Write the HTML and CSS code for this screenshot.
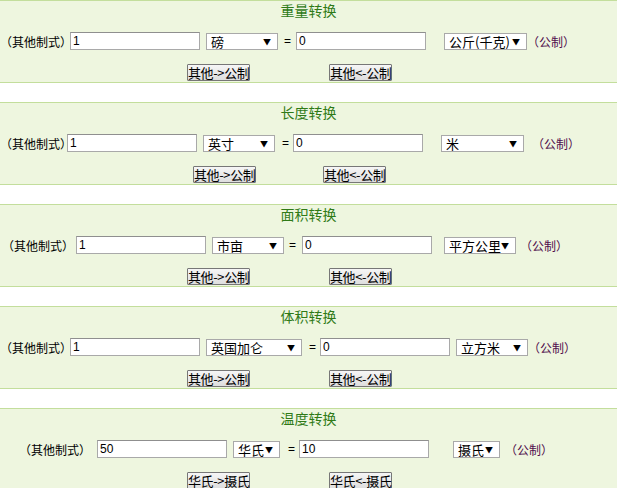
FILE: index.html
```html
<!doctype html>
<html lang="zh-CN">
  <head>
    <meta charset="UTF-8" />
    <title>单位换算</title>
    <link rel="stylesheet" href="styles.css">
  </head>
  <body>
    <div class="box box-weight">
      <div class="title">重量转换</div>
      <div class="row">
        <span class="label">（其他制式）</span>
        <input class="num" type="text" value="1" />
        <span class="sel sel-w72"><select><option>磅</option></select></span>
        <span class="eq">=</span>
        <input class="num" type="text" value="0" />
        <span class="sel sel-w83"><select><option>公斤(千克)</option></select></span>
        <span class="unit">（公制）</span>
      </div>
      <div class="btns">
        <button>其他-&gt;公制</button>
        <button>其他&lt;-公制</button>
      </div>
    </div>

    <div class="box box-length">
      <div class="title">长度转换</div>
      <div class="row">
        <span class="label">（其他制式）</span>
        <input class="num" type="text" value="1" />
        <span class="sel sel-w72"><select><option>英寸</option></select></span>
        <span class="eq">=</span>
        <input class="num" type="text" value="0" />
        <span class="sel sel-w83"><select><option>米</option></select></span>
        <span class="unit">（公制）</span>
      </div>
      <div class="btns">
        <button>其他-&gt;公制</button>
        <button>其他&lt;-公制</button>
      </div>
    </div>

    <div class="box box-area">
      <div class="title">面积转换</div>
      <div class="row">
        <span class="label">（其他制式）</span>
        <input class="num" type="text" value="1" />
        <span class="sel sel-w72"><select><option>市亩</option></select></span>
        <span class="eq">=</span>
        <input class="num" type="text" value="0" />
        <span class="sel sel-w72"><select><option>平方公里</option></select></span>
        <span class="unit">（公制）</span>
      </div>
      <div class="btns">
        <button>其他-&gt;公制</button>
        <button>其他&lt;-公制</button>
      </div>
    </div>

    <div class="box box-volume">
      <div class="title">体积转换</div>
      <div class="row">
        <span class="label">（其他制式）</span>
        <input class="num" type="text" value="1" />
        <span class="sel sel-w96"><select><option>英国加仑</option></select></span>
        <span class="eq">=</span>
        <input class="num" type="text" value="0" />
        <span class="sel sel-w72"><select><option>立方米</option></select></span>
        <span class="unit">（公制）</span>
      </div>
      <div class="btns">
        <button>其他-&gt;公制</button>
        <button>其他&lt;-公制</button>
      </div>
    </div>

    <div class="box box-temp">
      <div class="title">温度转换</div>
      <div class="row">
        <span class="label">（其他制式）</span>
        <input class="num" type="text" value="50" />
        <span class="sel sel-w47"><select><option>华氏</option></select></span>
        <span class="eq">=</span>
        <input class="num" type="text" value="10" />
        <span class="sel sel-w47"><select><option>摄氏</option></select></span>
        <span class="unit">（公制）</span>
      </div>
      <div class="btns">
        <button>华氏-&gt;摄氏</button>
        <button>华氏&lt;-摄氏</button>
      </div>
    </div>
  </body>
</html>
```

FILE: styles.css
```css
body {
  margin: 0;
  background-color: white;
  font-family: "Noto Sans CJK SC", "DejaVu Sans", sans-serif;
  font-size: 12px;
  color: black;
}
.box {
  background-color: #eef6df;
  border-top: 1px solid #c3de9c;
  border-bottom: 1px solid #c3de9c;
  margin-bottom: 19px;
}
.box-weight {
  border-top-width: 2px;
  margin-top: -1px;
}
.title {
  height: 20px;
  line-height: 19px;
  text-align: center;
  font-size: 14px;
  color: #2f7a17;
}
.row {
  display: grid;
  align-items: center;
  height: 40px;
}
.label {
  white-space: nowrap;
  margin-left: -6px;
  font-size: 12px;
}
.num {
  box-sizing: border-box;
  width: 130px;
  height: 18px;
  margin: 0;
  padding: 0 2px;
  border: 1px solid #a9a9a9;
  border-top-color: #8f8f8f;
  font-family: "Liberation Sans", "Noto Sans CJK SC", sans-serif;
  font-size: 12px;
  background: white;
}
.sel {
  position: relative;
  display: block;
  height: 17px;
}
.sel select {
  box-sizing: border-box;
  appearance: none;
  width: 100%;
  height: 17px;
  margin: 0;
  padding: 0 0 0 4px;
  border: 1px solid #a9a9a9;
  background: white;
  font-family: "Noto Sans CJK SC", sans-serif;
  font-size: 13px;
  line-height: 15px;
  color: black;
}
.sel::after {
  content: "▼";
  position: absolute;
  right: 7px;
  top: 3px;
  font-size: 8px;
  line-height: 11px;
  pointer-events: none;
}
.sel-w72 { width: 72px; }
.sel-w83 { width: 83px; }
.sel-w96 { width: 96px; }
.sel-w47 { width: 47px; }
.eq {
  font-family: "Liberation Sans", sans-serif;
  font-size: 12px;
}
.unit {
  margin-left: -5px;
  color: #4e0d4c;
  white-space: nowrap;
}
.btns {
  display: grid;
  padding-top: 3px;
  height: 18px;
}
.btns button {
  box-sizing: border-box;
  width: 63px;
  height: 17px;
  margin: 0;
  padding: 0;
  border: 1px solid #777;
  border-radius: 1px;
  background: linear-gradient(#f6f6f6, #dedede);
  font-family: "Noto Sans CJK SC", sans-serif;
  font-size: 13px;
  line-height: 15px;
  color: black;
  white-space: nowrap;
  letter-spacing: -0.4px;
}

/* column positions per converter, like the old table cells */
.box-weight .row {
  padding-left: 6px;
  grid-template-columns: 64px 136px 78px 12px 148px 88px auto;
}
.box-length .row {
  padding-left: 6px;
  grid-template-columns: 61px 136px 79px 11px 148px 96px auto;
}
.box-area .row {
  padding-left: 8px;
  grid-template-columns: 68px 136px 77px 13px 142px 81px auto;
}
.box-volume .row {
  padding-left: 6px;
  grid-template-columns: 64px 136px 103px 11px 136px 77px auto;
}
.box-temp .row {
  padding-left: 25px;
  grid-template-columns: 72px 136px 55px 11px 154px 57px auto;
}
.btns {
  padding-left: 187px;
  grid-template-columns: 142px auto;
}
.box-length .btns {
  padding-left: 193px;
  grid-template-columns: 130px auto;
}
```
